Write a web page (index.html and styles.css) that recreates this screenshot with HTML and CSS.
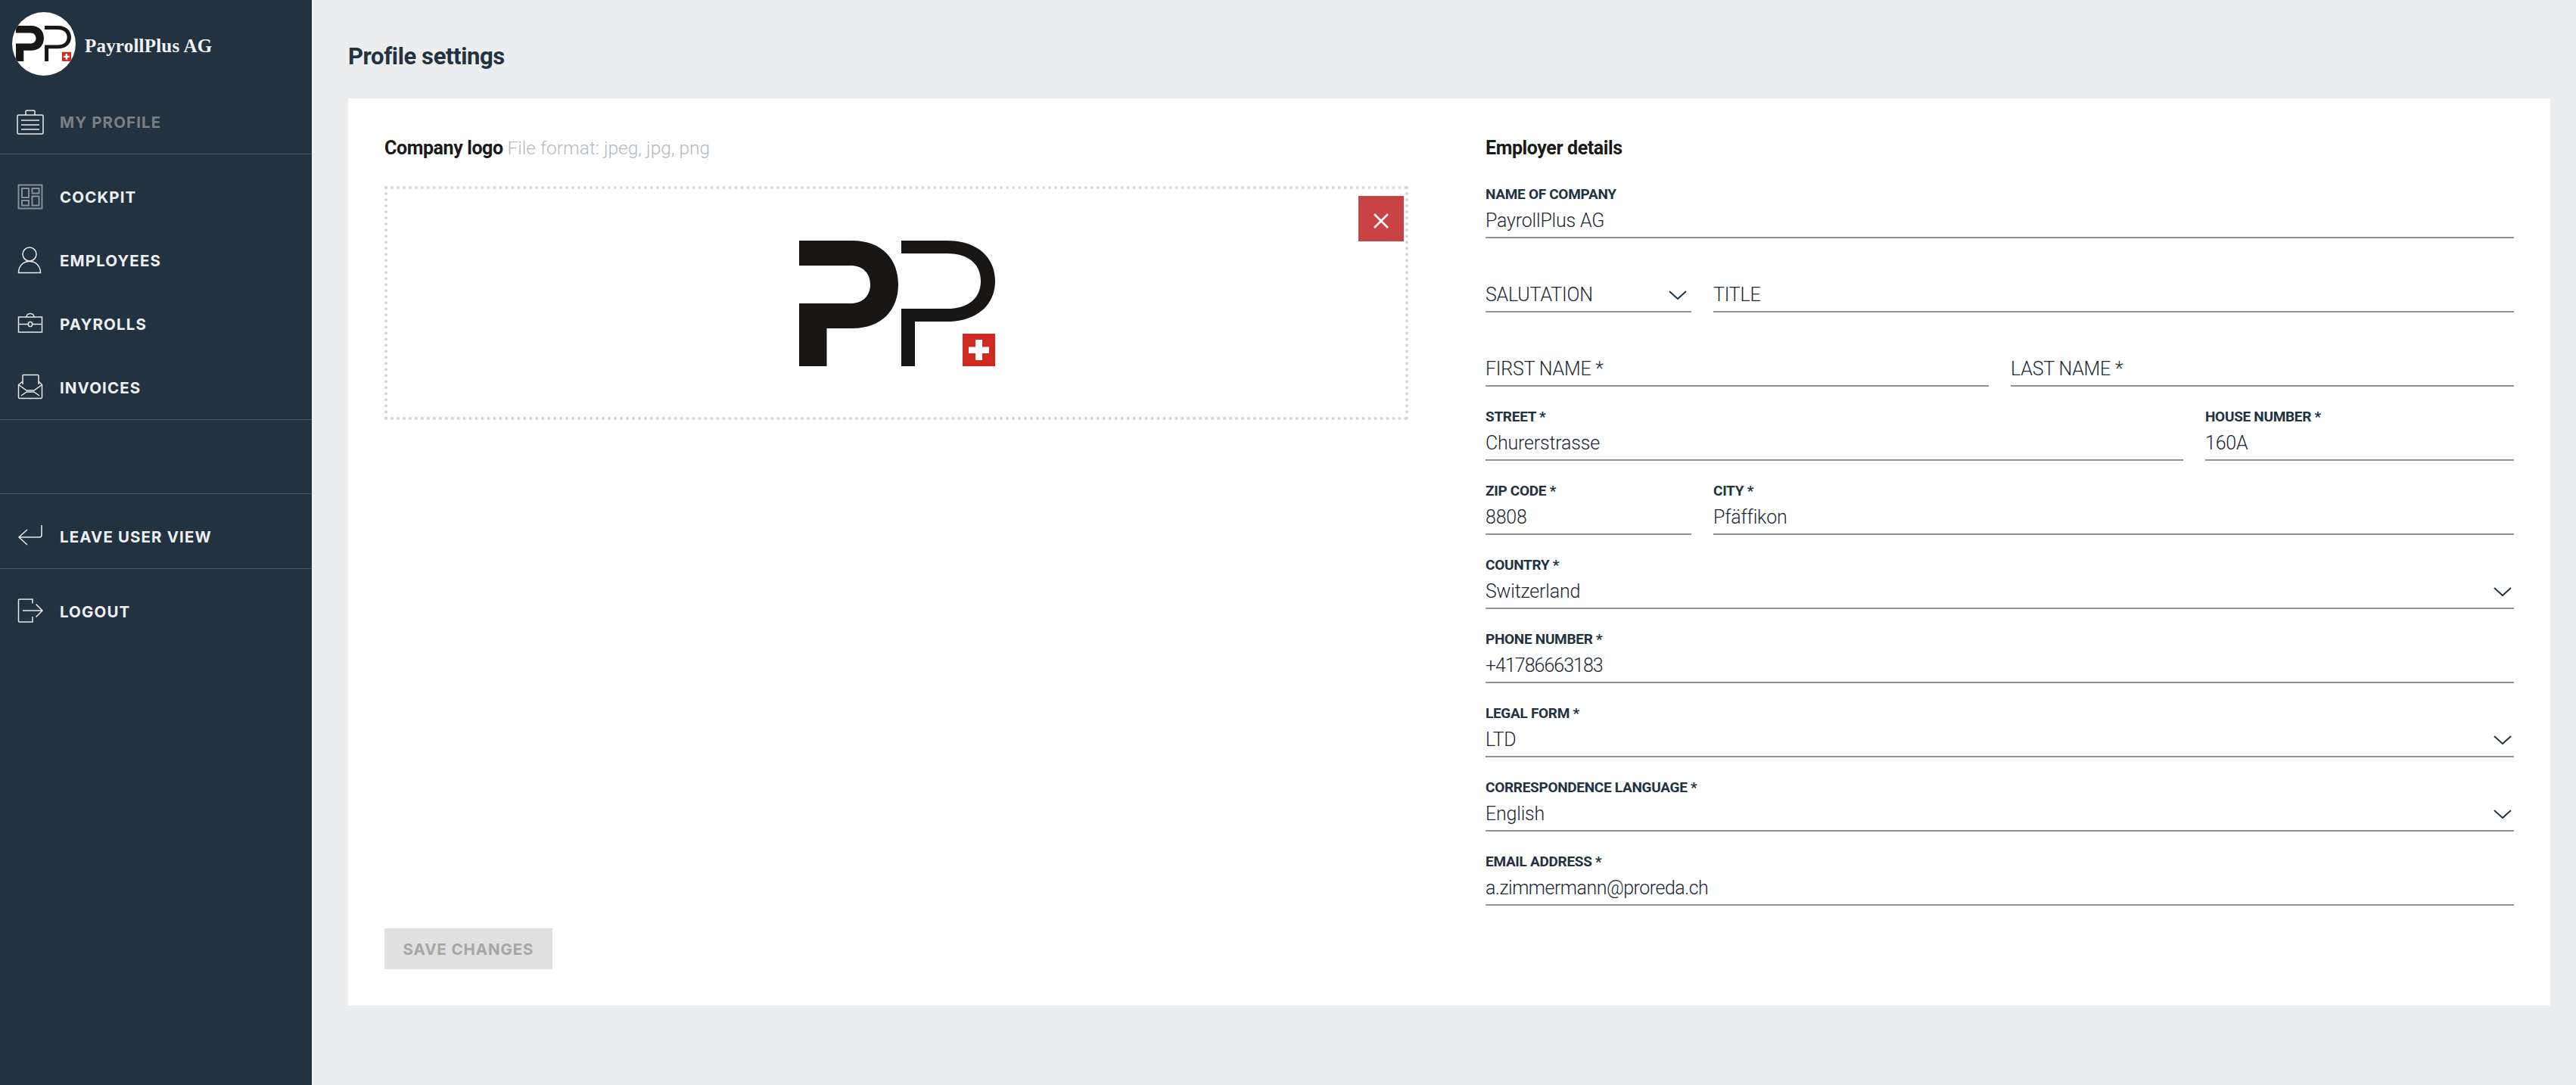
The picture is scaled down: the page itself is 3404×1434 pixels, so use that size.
FILE: index.html
```html
<!DOCTYPE html>
<html>
<head>
  <title>Profile settings - PayrollPlus</title>
  <link rel="stylesheet" href="styles.css">
</head>
<body>
  <svg class="defs" width="0" height="0">
    <symbol id="pp-logo" viewBox="0 0 259 166">
      <path fill="#181715" d="M0 0H70C110 0 131 25 131 58C131 91 110 116 70 116H36.500V166H0V83H68C84 83 94 73 94 58C94 43 84 33 68 33H0Z"/>
      <path fill="#181715" d="M135 0H195C235 0 259 22 259 53.500C259 85 235 107 195 107H153V166H135V90H195C225 90 240 75 240 53.500C240 32 225 17 195 17H135Z"/>
      <rect x="216" y="123" width="43" height="43" fill="#cf2a20"/>
      <path fill="#fff" d="M233 131H242V140.500H251V149H242V158H233V149H224V140.500H233Z"/>
    </symbol>
  </svg>

  <aside class="sidebar">
    <div class="brand">
      <div class="brand-logo"><svg width="73" height="47"><use href="#pp-logo"/></svg></div>
      <span class="brand-name">PayrollPlus AG</span>
    </div>

    <div class="nav-group nav-top">
      <a class="nav-item dim">
        <svg class="icon" viewBox="0 0 36 34"><rect x="1" y="7" width="34" height="25" rx="1.500"/><path d="M12 7V2.500Q12 1 13.500 1H22.500Q24 1 24 2.500V7M6 14H30M6 20H30M6 26H30"/></svg>
        MY PROFILE
      </a>
    </div>

    <div class="nav-group">
      <a class="nav-item">
        <svg class="icon icon-grey" viewBox="0 0 36 34"><rect x="2.500" y="1.500" width="31" height="31"/><rect x="7" y="6" width="9" height="12"/><rect x="20.500" y="6" width="9" height="6.500"/><rect x="7" y="22" width="9" height="6.500"/><rect x="20.500" y="16.500" width="9" height="12"/></svg>
        COCKPIT
      </a>
      <a class="nav-item">
        <svg class="icon" viewBox="0 0 36 36"><circle cx="17" cy="10" r="9"/><path d="M2.500 34.500C2.500 25 9 19.500 17 19.500C25 19.500 31.500 25 31.500 34.500Z"/></svg>
        EMPLOYEES
      </a>
      <a class="nav-item">
        <svg class="icon" viewBox="0 0 36 34"><rect x="2.500" y="8" width="31" height="20"/><path d="M2.500 17.500H15M21 17.500H33.500M13 8C13 2 23 2 23 8"/><rect x="15.500" y="14.500" width="5" height="6" rx="2"/></svg>
        PAYROLLS
      </a>
      <a class="nav-item">
        <svg class="icon" viewBox="0 0 36 36"><path d="M8 14V2.500Q8 1.500 9 1.500H28Q29 1.500 29 2.500V14M8 10L2.500 14.500V31Q2.500 32.500 4 32.500H32Q33.500 32.500 33.500 31V14.500L29 10M2.500 14.500L13 22H23L33.500 14.500M6 29L13 24H23L30 29"/></svg>
        INVOICES
      </a>
    </div>

    <div class="nav-spacer"></div>

    <div class="nav-group">
      <a class="nav-item">
        <svg class="icon" viewBox="0 0 36 34"><path d="M33 2V15Q33 18 30 18H3M14 8L3 18L14 28"/></svg>
        LEAVE USER VIEW
      </a>
    </div>
    <div class="nav-group no-line">
      <a class="nav-item">
        <svg class="icon" viewBox="0 0 36 36"><path d="M21 7.500V2H3.500Q2.500 2 2.500 3V31Q2.500 32 3.500 32H21V25"/><path d="M8 17H33.500M25.500 8.500L34 17L25.500 25.500"/></svg>
        LOGOUT
      </a>
    </div>
  </aside>

  <main class="main">
    <h1 class="page-title">Profile settings</h1>

    <div class="card">
      <section class="logo-col">
        <h2 class="section-title">Company logo <span class="hint">File format: jpeg, jpg, png</span></h2>
        <div class="dropzone">
          <svg class="dropzone-logo" width="259" height="166"><use href="#pp-logo"/></svg>
          <button class="remove-btn" type="button">
            <svg width="20" height="20" viewBox="0 0 20 20"><path d="M1 1L19 19M19 1L1 19"/></svg>
          </button>
        </div>
        <button class="save-btn" type="button" disabled>SAVE CHANGES</button>
      </section>

      <section class="details-col">
        <h2 class="section-title">Employer details</h2>

        <div class="row">
          <div class="field"><label>NAME OF COMPANY</label><div class="value">PayrollPlus AG</div></div>
        </div>
        <div class="row">
          <div class="field narrow">
            <div class="value empty">SALUTATION <svg class="chevron" viewBox="0 0 24 12"><path d="M1 1L12 11L23 1"/></svg></div>
          </div>
          <div class="field"><div class="value empty">TITLE</div></div>
        </div>
        <div class="row">
          <div class="field"><div class="value empty">FIRST NAME *</div></div>
          <div class="field"><div class="value empty">LAST NAME *</div></div>
        </div>
        <div class="row">
          <div class="field"><label>STREET *</label><div class="value">Churerstrasse</div></div>
          <div class="field house"><label>HOUSE NUMBER *</label><div class="value">160A</div></div>
        </div>
        <div class="row">
          <div class="field narrow"><label>ZIP CODE *</label><div class="value">8808</div></div>
          <div class="field"><label>CITY *</label><div class="value">Pfäffikon</div></div>
        </div>
        <div class="row">
          <div class="field"><label>COUNTRY *</label><div class="value">Switzerland <svg class="chevron" viewBox="0 0 24 12"><path d="M1 1L12 11L23 1"/></svg></div></div>
        </div>
        <div class="row">
          <div class="field"><label>PHONE NUMBER *</label><div class="value digits">+41786663183</div></div>
        </div>
        <div class="row">
          <div class="field"><label>LEGAL FORM *</label><div class="value">LTD <svg class="chevron" viewBox="0 0 24 12"><path d="M1 1L12 11L23 1"/></svg></div></div>
        </div>
        <div class="row">
          <div class="field"><label>CORRESPONDENCE LANGUAGE *</label><div class="value">English <svg class="chevron" viewBox="0 0 24 12"><path d="M1 1L12 11L23 1"/></svg></div></div>
        </div>
        <div class="row">
          <div class="field"><label>EMAIL ADDRESS *</label><div class="value email">a.zimmermann@proreda.ch</div></div>
        </div>
      </section>
    </div>
  </main>
</body>
</html>
```

FILE: styles.css
```css
* { box-sizing: border-box; }
html, body { height: 100%; }
body { margin: 0; display: flex; background: #ecedef; color: #233240; font-family: "Roboto", sans-serif; overflow: hidden; }
.defs { display: block; }

.sidebar { width: 412px; flex: none; background: #233240; color: #eef0f2; display: flex; flex-direction: column; }
.brand { height: 120px; padding: 16px 0 0 16px; display: flex; align-items: flex-start; gap: 12px; }
.brand-logo { width: 84px; height: 84px; border-radius: 50%; background: #fff; overflow: hidden; padding: 18px 0 0 5px; }
.brand-logo svg { display: block; }
.brand-name { font-family: "Liberation Serif", serif; font-weight: 700; font-size: 25px; line-height: 90px; letter-spacing: 0.2px; color: #f2f3f4; }

.nav-group { padding-top: 14px; border-bottom: 1px solid #4a5866; }
.nav-group.no-line { border-bottom: none; }
.nav-top { padding-top: 0; }
.nav-top .nav-item { height: 83px; }
.nav-spacer { height: 98px; border-bottom: 1px solid #4a5866; }
.nav-item { height: 84px; display: flex; align-items: center; padding-left: 22px; font-family: "Inter", sans-serif; font-weight: 700; font-size: 20.500px; letter-spacing: 1.100px; color: #eef0f2; }
.nav-item.dim { color: #7b7f83; }
.icon { width: 36px; height: 36px; margin-right: 21px; fill: none; stroke: #e8eaec; stroke-width: 1.500; }
.icon-grey { stroke: #87919a; stroke-width: 2; }

.main { flex: 1; padding: 0 34px 0 48px; }
.page-title { margin: 0; height: 130px; line-height: 150px; font-size: 31px; font-weight: 700; color: #233240; letter-spacing: -0.4px; }

.card { height: 1199px; background: #fff; padding: 48px; display: flex; gap: 102px; }
.logo-col { width: 1353px; flex: none; display: flex; flex-direction: column; }
.details-col { flex: 1; }
.section-title { margin: 0; height: 36px; line-height: 36px; font-size: 25px; font-weight: 700; color: #1a1a1a; letter-spacing: -0.4px; }
.hint { font-size: 24.500px; font-weight: 300; color: #b4b9be; letter-spacing: 0; }

.dropzone { position: relative; margin-top: 32px; height: 309px; border: 4px dotted #d6d6d6; display: flex; align-items: center; justify-content: center; }
.dropzone-logo { margin-left: 2px; }
.remove-btn { position: absolute; top: 9px; right: 2px; width: 60px; height: 60px; border: none; padding: 6px 0 0; background: #c94345; display: flex; align-items: center; justify-content: center; }
.remove-btn svg { fill: none; stroke: #fff; stroke-width: 2.500; }
.save-btn { margin-top: auto; align-self: flex-start; width: 222px; height: 54px; border: none; padding: 0; background: #e0e0e0; color: #a6a6a6; font-family: "Inter", sans-serif; font-weight: 700; font-size: 20.500px; letter-spacing: 0.900px; }

.row { display: flex; gap: 29px; height: 98px; }
.row:first-of-type { margin-top: 3px; }
.field { flex: 1; display: flex; flex-direction: column; justify-content: flex-end; border-bottom: 2px solid #929292; padding-bottom: 3px; min-width: 0; }
.field.narrow { flex: none; width: 272px; }
.field.house { flex: none; width: 408px; }
label { font-size: 19px; line-height: 20px; font-weight: 700; margin-bottom: 7px; letter-spacing: -0.3px; color: #233240; }
.value { display: flex; justify-content: space-between; align-items: center; height: 36px; line-height: 36px; font-size: 25px; font-weight: 300; letter-spacing: -0.200px; color: #1c2833; }
.value.digits { letter-spacing: -1px; }
.value.email { letter-spacing: -0.500px; }
.chevron { width: 24px; height: 12px; margin-right: 3px; fill: none; stroke: #233240; stroke-width: 2; }
.narrow .chevron { margin-right: 6px; }
```
